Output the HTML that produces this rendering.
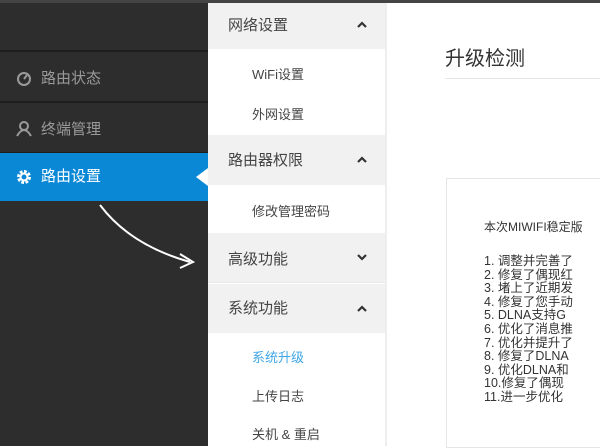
<!DOCTYPE html>
<html><head><meta charset="utf-8"><style>
*{margin:0;padding:0;box-sizing:border-box}
body{width:600px;height:446px;overflow:hidden;position:relative;background:#fff;font-family:"Liberation Sans","Noto Sans CJK SC",sans-serif}
.side{position:absolute;left:0;top:0;width:208px;height:446px;background:#2d2d2d}
.sep{position:absolute;left:0;width:208px;height:2px;background:#1e1e1e}
.si{position:absolute;left:0;width:208px;height:48px;color:#9a9a9a;font-size:15px;line-height:48px;padding-left:41px}
.act{background:#0a88d6;color:#fff}
.mid{position:absolute;left:208px;top:0;width:177px;height:446px;background:#fff}
.h{position:absolute;left:0;width:177px;background:#f1f1f1;color:#444;font-size:15px;padding-left:20px}
.h svg{position:absolute;right:18px;top:50%;margin-top:-4px}
.it{position:absolute;left:44px;font-size:13px;color:#444}
.right{position:absolute;left:385px;top:0;width:215px;height:446px;background:#fff;border-left:2px solid #eee}
.top{position:absolute;left:0;top:0;width:600px;height:3px;background:#444}
.list{position:absolute;left:484px;top:255px;font-size:12.5px;line-height:13.6px;color:#333;white-space:nowrap}
</style></head><body>
<div class="side"></div>
<div class="sep" style="top:50px"></div>
<div class="sep" style="top:101px"></div>
<div class="sep" style="top:152px"></div>
<div class="si" style="top:55px">路由状态</div>
<div class="si" style="top:106px">终端管理</div>
<div class="si act" style="top:153px">路由设置</div>
<svg style="position:absolute;left:0;top:0" width="210" height="446">
<circle cx="24" cy="79" r="6" fill="none" stroke="#9a9a9a" stroke-width="2"/><path d="M24 79 L27 75" stroke="#9a9a9a" stroke-width="2"/>
<circle cx="24" cy="126" r="4" fill="none" stroke="#9a9a9a" stroke-width="2"/><path d="M17 136 Q24 124 31 136" fill="none" stroke="#9a9a9a" stroke-width="2"/>
<circle cx="24" cy="177" r="5" fill="none" stroke="#fff" stroke-width="4" stroke-dasharray="2.5 1.4"/><circle cx="24" cy="177" r="3.5" fill="none" stroke="#fff" stroke-width="2"/>
<path d="M208 168 L196 177 L208 186Z" fill="#fff"/>
<path d="M100 205 Q130 245 190 262" fill="none" stroke="#fff" stroke-width="2"/>
<path d="M180 254 L193 262 L180 268" fill="none" stroke="#fff" stroke-width="2"/>
</svg>
<div class="mid">
<div class="h" style="top:0;height:49px;line-height:52px">网络设置<svg width="10" height="7"><path d="M1 6 L5 2 L9 6" fill="none" stroke="#333" stroke-width="2.2"/></svg></div>
<div class="it" style="top:64px">WiFi设置</div>
<div class="it" style="top:104px">外网设置</div>
<div class="h" style="top:135px;height:50px;line-height:52px">路由器权限<svg width="10" height="7"><path d="M1 6 L5 2 L9 6" fill="none" stroke="#333" stroke-width="2.2"/></svg></div>
<div class="it" style="top:201px">修改管理密码</div>
<div class="h" style="top:233px;height:50px;line-height:54px;border-bottom:1px solid #e8e8e8">高级功能<svg width="10" height="7"><path d="M1 1 L5 5 L9 1" fill="none" stroke="#333" stroke-width="2.2"/></svg></div>
<div class="h" style="top:284px;height:49px;line-height:50px">系统功能<svg width="10" height="7"><path d="M1 6 L5 2 L9 6" fill="none" stroke="#333" stroke-width="2.2"/></svg></div>
<div class="it" style="top:347px;color:#3fa6e6">系统升级</div>
<div class="it" style="top:386px">上传日志</div>
<div class="it" style="top:424px">关机 &amp; 重启</div>
</div>
<div class="right"></div>
<div style="position:absolute;left:445px;top:42px;font-size:20px;color:#333">升级检测</div>
<div style="position:absolute;left:445px;top:78px;width:155px;height:1px;background:#e6e6e6"></div>
<div style="position:absolute;left:446px;top:178px;width:160px;height:270px;border:1px solid #e6e6e6"></div>
<div style="position:absolute;left:484px;top:218px;font-size:12px;color:#333;white-space:nowrap">本次MIWIFI稳定版</div>
<div class="list">1. 调整并完善了<br>2. 修复了偶现红<br>3. 堵上了近期发<br>4. 修复了您手动<br>5. DLNA支持G<br>6. 优化了消息推<br>7. 优化并提升了<br>8. 修复了DLNA<br>9. 优化DLNA和<br>10.修复了偶现<br>11.进一步优化</div>
<div class="top"></div>
</body></html>
